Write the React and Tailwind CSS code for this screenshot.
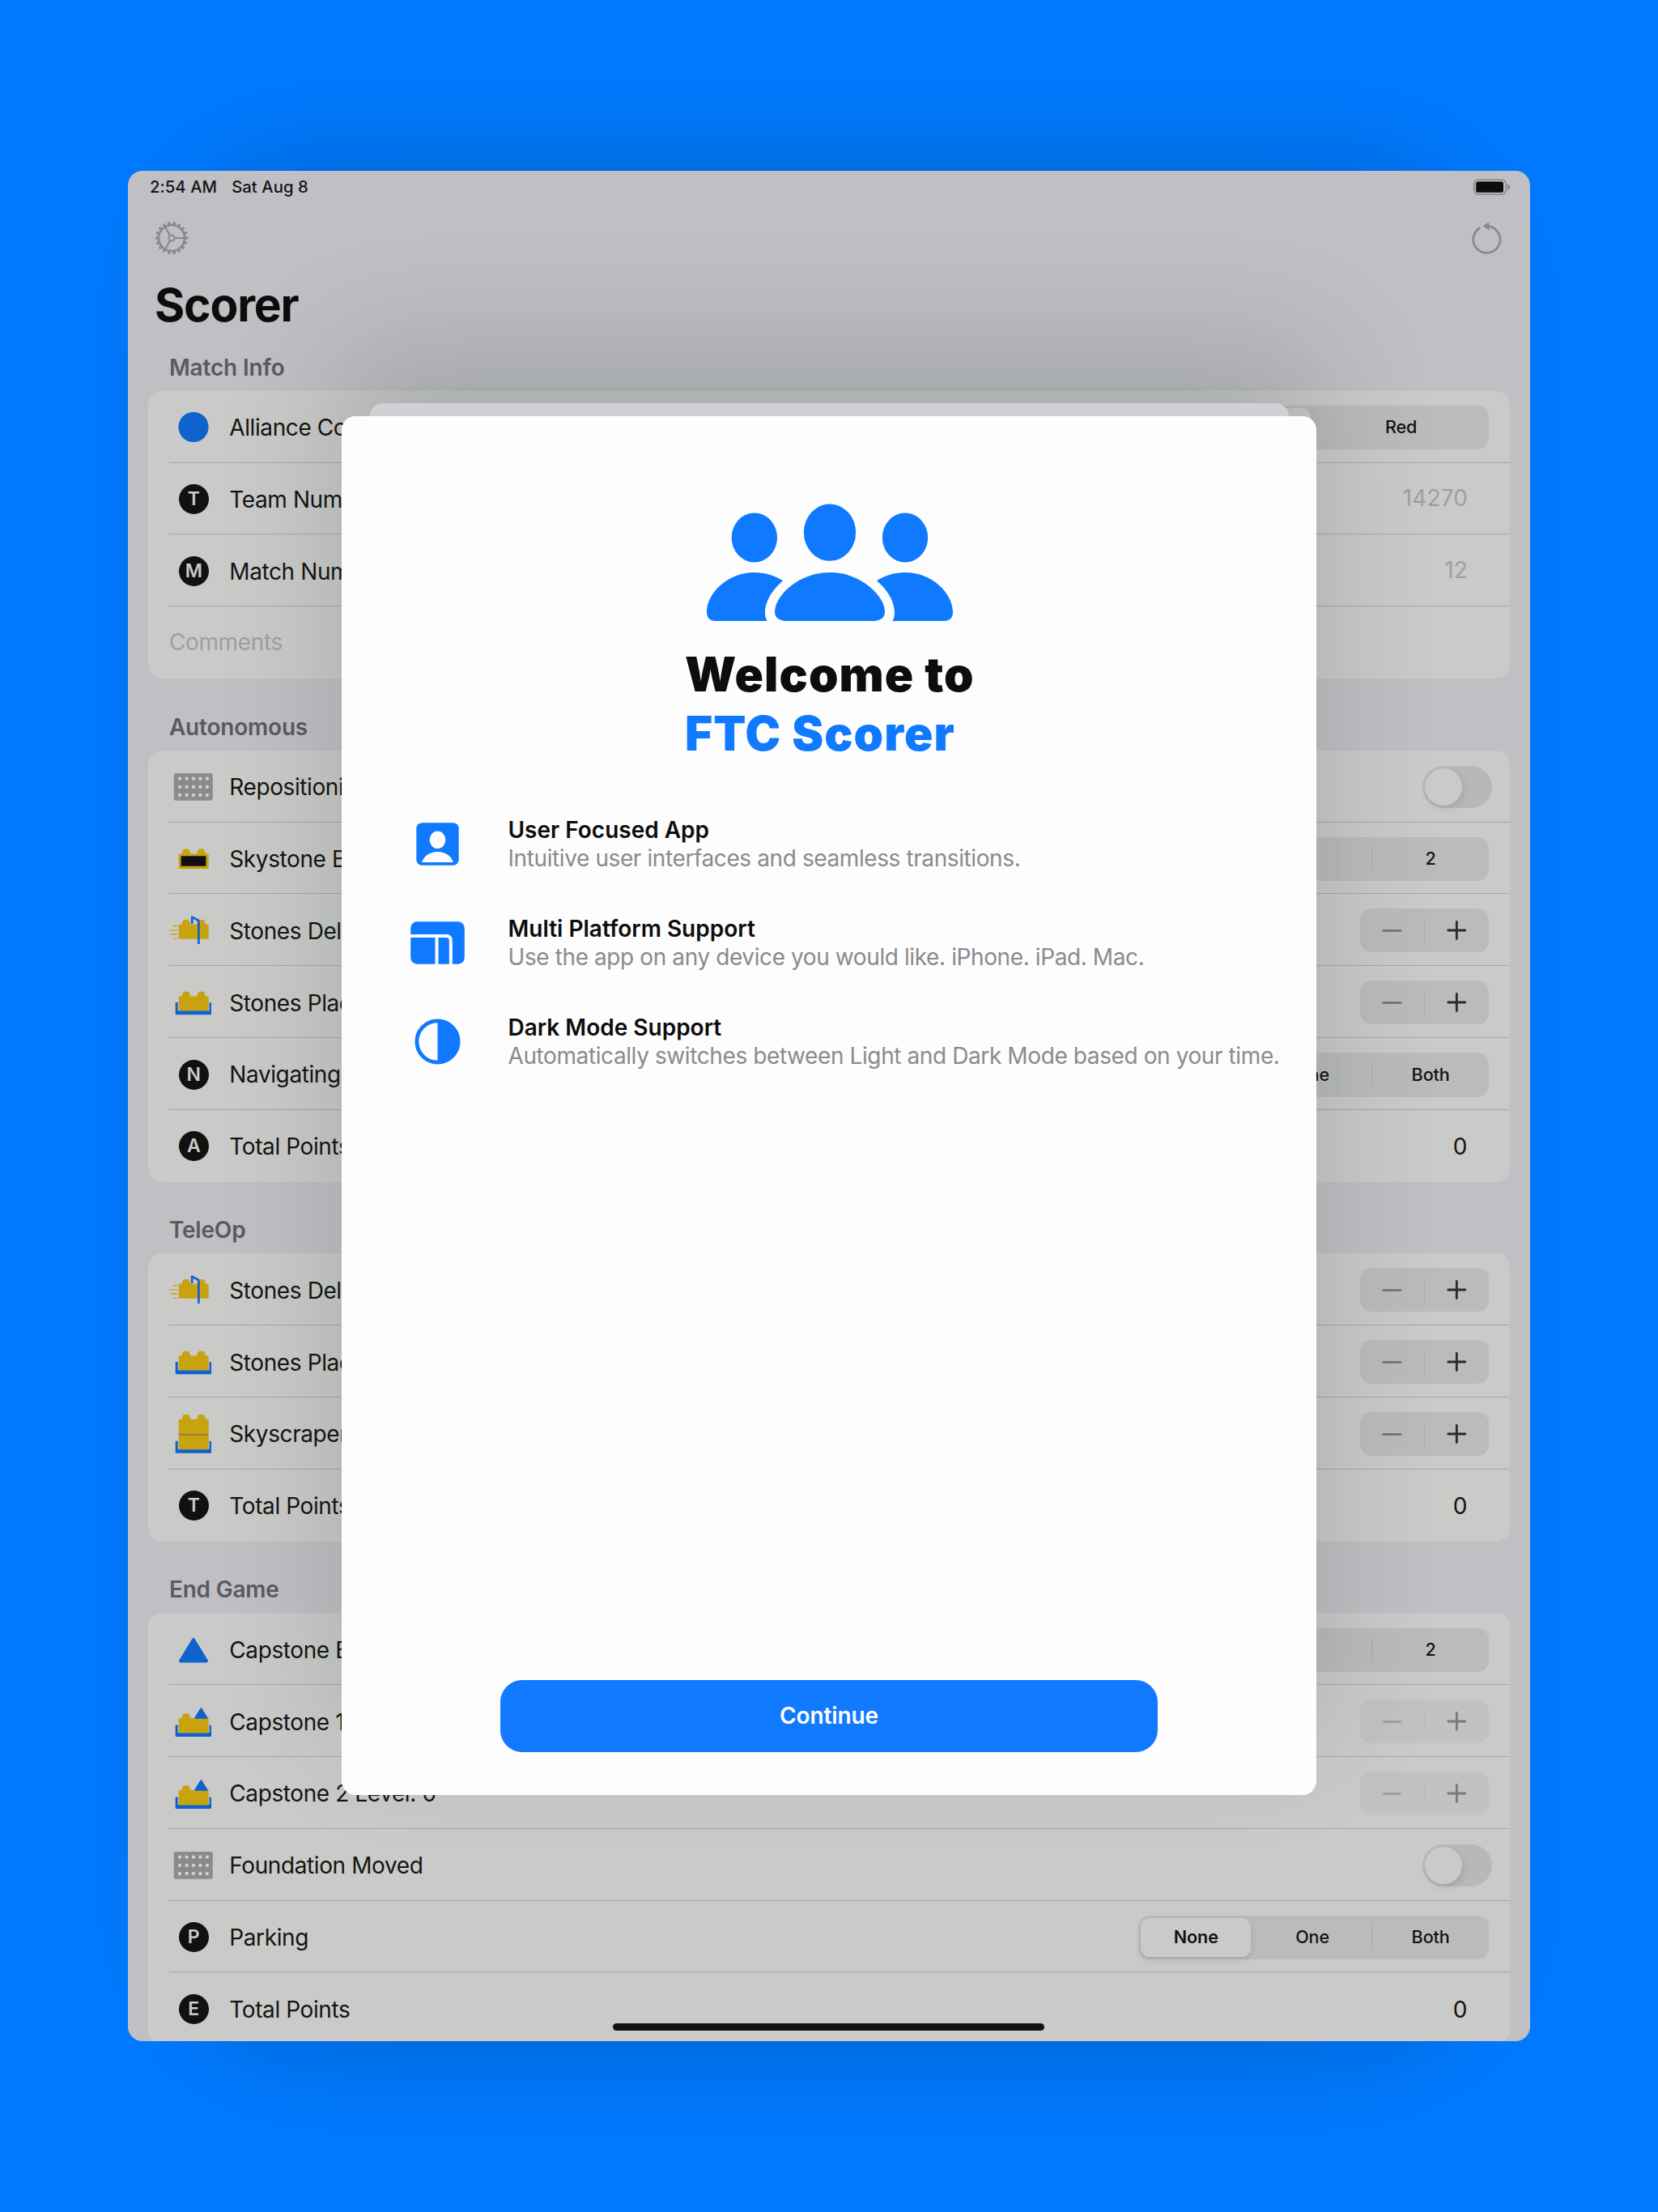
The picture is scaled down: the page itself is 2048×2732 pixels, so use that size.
import React from "react";

const GOLD = "#c9a20f";
const BLUE = "#1062cd";

function Brick({ top, body, bottom }) {
  return (
    <path
      fill={GOLD}
      d={`M-17.3 ${bottom} L-18.3 ${bottom - 1} V${body + 1} Q-18.3 ${body} -17.3 ${body} H-14.8 L-12.9 ${top + 1} Q-12.4 ${top} -11.4 ${top} H-7 Q-6 ${top} -5.5 ${top + 1} L-3.4 ${body} H3.8 L5.9 ${top + 1} Q6.4 ${top} 7.4 ${top} H11.8 Q12.8 ${top} 13.3 ${top + 1} L15.2 ${body} H17.7 Q18.7 ${body} 18.7 ${body + 1} V${bottom - 1} L17.7 ${bottom} Z`}
    />
  );
}

function Base({ top, bottom }) {
  return (
    <path
      fill={BLUE}
      d={`M-22.3 ${top} H-19.3 V${bottom - 5} H19.6 V${top} H21 Q22 ${top} 22 ${top + 1} V${bottom - 1} Q22 ${bottom} 21 ${bottom} H-21.3 Q-22.3 ${bottom} -22.3 ${bottom - 1} Z`}
    />
  );
}

function Art({ kind }) {
  if (kind === "circle") return <circle r="18.6" cy="0.5" fill={BLUE} />;
  if (kind === "foundation")
    return (
      <>
        <rect x="-24.2" y="-15.9" width="48" height="33.6" rx="2.6" fill="#8b8b8c" />
        {[-16.9, -8.4, 0, 8.4, 16.9].map((x) =>
          [-9.4, 0.8, 11].map((y) => (
            <rect key={x + "," + y} x={x - 1.9} y={y - 1.9} width="3.8" height="3.8" rx="0.8" fill="#d2d2d2" />
          ))
        )}
      </>
    );
  if (kind === "skystone")
    return (
      <>
        <Brick top={-11.4} body={-5.5} bottom={12.9} />
        <rect x="-15.4" y="-2.8" width="30.8" height="12.6" rx="0.6" fill="#101010" />
      </>
    );
  if (kind === "delivered")
    return (
      <>
        <Brick top={-13} body={-7.3} bottom={10.7} />
        <g stroke={GOLD} strokeWidth="1.4" strokeLinecap="round">
          <path d="M-24.8 -5.3H-20.6" />
          <path d="M-29.6 -0.1H-20.6" />
          <path d="M-28 5H-20.6" />
          <path d="M-24.8 10.1H-20.6" />
        </g>
        <path d="M-1.8 -7.9V-16.4L6.4 -12V17" fill="none" stroke={BLUE} strokeWidth="2.7" strokeLinejoin="round" />
      </>
    );
  if (kind === "placed")
    return (
      <>
        <Base top={0.1} bottom={15.2} />
        <Brick top={-13.2} body={-7.5} bottom={10.2} />
      </>
    );
  if (kind === "skyscraper")
    return (
      <>
        <Base top={8.7} bottom={23.7} />
        <Brick top={-24} body={-18} bottom={19.3} />
        <path d="M-18.3 0.9H18.7" stroke="#8a7a4a" strokeWidth="1.6" />
      </>
    );
  if (kind === "triangle")
    return (
      <path
        d="M0 -12.6L15.9 13.6H-15.9Z"
        fill={BLUE}
        stroke={BLUE}
        strokeWidth="4"
        strokeLinejoin="round"
        transform="translate(0 0.8)"
      />
    );
  return (
    <>
      <Base top={4.4} bottom={18.9} />
      <Brick top={-9.8} body={-3.8} bottom={14.4} />
      <path d="M1 -10.5H18.8V-3.8H1Z" fill="#cacac9" />
      <path d="M9.4 -16L17 -4H1.8Z" fill={BLUE} stroke={BLUE} strokeWidth="1.6" strokeLinejoin="round" />
    </>
  );
}

function RowIcon({ kind, letter }) {
  if (letter)
    return (
      <span className="flex h-[37px] w-[37px] items-center justify-center rounded-full bg-[#111111] text-[23px] font-semibold leading-none text-[#cacac9]">
        {letter}
      </span>
    );
  return (
    <svg width="64" height="56" viewBox="-32 -28 64 56" className="mb-[1.4px] shrink-0">
      <Art kind={kind} />
    </svg>
  );
}

function Toggle() {
  return (
    <div className="mr-[-4px] flex h-[52.4px] w-[86.3px] items-center rounded-full bg-[#b8b8ba] pl-[3.4px]">
      <div className="h-[45.8px] w-[45.8px] rounded-full bg-[#cacaca] shadow-[2px_4px_8px_rgba(0,0,0,0.1)]" />
    </div>
  );
}

function Segmented({ options }) {
  const three = options.length === 3;
  return (
    <div className="flex h-[54.4px] w-[433px] items-center rounded-[14px] bg-[#bbbbbb] py-[3.4px] pl-[3.4px] text-[21.6px] font-medium leading-none tracking-[-0.1px] text-[#121212]">
      <div
        className={
          three
            ? "flex h-full w-[136px] items-center justify-center rounded-[11.5px] bg-[#cacaca] font-semibold shadow-[0_4px_8px_rgba(0,0,0,0.1)]"
            : "flex h-full w-[210px] items-center justify-center rounded-[11.5px] bg-[#cacaca] font-semibold shadow-[0_4px_8px_rgba(0,0,0,0.1)]"
        }
      >
        {options[0]}
      </div>
      <div className="flex flex-1 justify-center pl-[3px]">{options[1]}</div>
      {three && (
        <>
          <div className="h-[30px] w-[1.5px] shrink-0 bg-[#a8a8a9]" />
          <div className="flex w-[143.5px] justify-center">{options[2]}</div>
        </>
      )}
    </div>
  );
}

function Stepper({ disabled }) {
  return (
    <div
      className={
        disabled
          ? "mb-[1px] flex h-[54px] w-[158.8px] items-center rounded-[14px] bg-[#bbbbbb] opacity-50"
          : "mb-[1px] flex h-[54px] w-[158.8px] items-center rounded-[14px] bg-[#bbbbbb]"
      }
    >
      <svg className="flex-1" height="30" viewBox="-39 -15 78 30">
        <path d="M-10.6 0.5H10.8" stroke="#6d6e6c" strokeWidth="2.6" strokeLinecap="round" />
      </svg>
      <div className="h-[30px] w-[1.5px] bg-[#a8a8a9]" />
      <svg className="flex-1" height="30" viewBox="-39 -15 78 30">
        <path d="M-10.5 0H10.5M0 -10.5V10.5" stroke="#2a2a2a" strokeWidth="2.8" strokeLinecap="round" />
      </svg>
    </div>
  );
}

function Row({ row, last }) {
  return (
    <div
      className={
        last
          ? "ml-[25.5px] flex h-[88.8px] items-center pr-[25.7px] pt-[1.6px]"
          : "ml-[25.5px] flex h-[88.8px] items-center border-b-[1.5px] border-[#a6a6a7] pr-[25.7px] pt-[3px]"
      }
    >
      {row.placeholder ? (
        <span className="mb-[3px] tracking-[-0.35px] text-[#9f9fa0]">{row.placeholder}</span>
      ) : (
        <>
          <div className="flex w-[60.4px] shrink-0 justify-center">
            <RowIcon kind={row.icon} letter={row.letter} />
          </div>
          <span className="ml-[14px] flex-1 whitespace-nowrap">{row.label}</span>
          {row.toggle && <Toggle />}
          {row.options && <Segmented options={row.options} />}
          {row.stepper && <Stepper disabled={row.disabled} />}
          {row.hint && <span className="mb-[4px] mr-[26px] tracking-[0.1px] text-[#9f9fa0]">{row.hint}</span>}
          {row.value && <span className="mr-[27px]">{row.value}</span>}
        </>
      )}
    </div>
  );
}

const sections = [
  {
    title: "Match Info",
    rows: [
      { icon: "circle", label: "Alliance Color", options: ["Blue", "Red"] },
      { letter: "T", label: "Team Number", hint: "14270" },
      { letter: "M", label: "Match Number", hint: "12" },
      { placeholder: "Comments" },
    ],
  },
  {
    title: "Autonomous",
    rows: [
      { icon: "foundation", label: "Repositioning", toggle: true },
      { icon: "skystone", label: "Skystone Bonus", options: ["0", "1", "2"] },
      { icon: "delivered", label: "Stones Delivered: 0", stepper: true },
      { icon: "placed", label: "Stones Placed: 0", stepper: true },
      { letter: "N", label: "Navigating", options: ["None", "One", "Both"] },
      { letter: "A", label: "Total Points", value: "0" },
    ],
  },
  {
    title: "TeleOp",
    rows: [
      { icon: "delivered", label: "Stones Delivered: 0", stepper: true },
      { icon: "placed", label: "Stones Placed: 0", stepper: true },
      { icon: "skyscraper", label: "Skyscraper Height: 0", stepper: true },
      { letter: "T", label: "Total Points", value: "0" },
    ],
  },
  {
    title: "End Game",
    rows: [
      { icon: "triangle", label: "Capstone Bonus", options: ["0", "1", "2"] },
      { icon: "capstone", label: "Capstone 1 Level: 0", stepper: true, disabled: true },
      { icon: "capstone", label: "Capstone 2 Level: 0", stepper: true, disabled: true },
      { icon: "foundation", label: "Foundation Moved", toggle: true },
      { letter: "P", label: "Parking", options: ["None", "One", "Both"] },
      { letter: "E", label: "Total Points", value: "0" },
    ],
  },
];

function Gear() {
  const teeth = Array.from({ length: 18 }, (_, i) => i * 20);
  return (
    <svg width="42" height="42" viewBox="-21 -21 42 42" fill="none" stroke="#8a8a8b">
      <circle r="16" strokeWidth="2.6" />
      {teeth.map((a) => (
        <path key={a} d="M17 -1.4L19.6 -0.8V0.8L17 1.4" strokeWidth="1.1" fill="#8a8a8b" transform={`rotate(${a})`} />
      ))}
      <circle r="3.6" strokeWidth="2" />
      <path d="M4 0H16M-2 -3.4L-8 -13.8M-2 3.4L-8 13.8" strokeWidth="2.2" />
    </svg>
  );
}

function Reload() {
  return (
    <svg width="40" height="42" viewBox="-20 -21 40 42" fill="none">
      <path
        d="M-8.4 -13.2A16.6 16.6 0 1 0 2.4 -15.6"
        stroke="#8a8a8b"
        strokeWidth="2.8"
        strokeLinecap="round"
        transform="translate(0 0.9)"
      />
      <path d="M-4.6 -14.9L3.4 -19.6V-9.4Z" fill="#8a8a8b" />
    </svg>
  );
}

function People() {
  const side =
    "M159 497C159 430 235 351 335 351C375 351 412 363 441 382C400 417 375 460 375 500C375 513 378 523 383 531H196C170 531 159 520 159 497Z";
  return (
    <svg width="306" height="146" viewBox="156 96 918 438" fill="#0f7aff">
      <ellipse cx="615" cy="203" rx="96.5" ry="105.5" />
      <path d="M411 497C411 440 497 351 615 351C733 351 819 440 819 497C819 520 800 531 773 531H457C430 531 411 520 411 497Z" />
      <ellipse cx="335.5" cy="222" rx="84.5" ry="91.5" />
      <path d={side} />
      <g transform="translate(1230 0) scale(-1 1)">
        <ellipse cx="336" cy="222" rx="84.5" ry="91.5" />
        <path d={side} />
      </g>
    </svg>
  );
}

function UserIcon() {
  return (
    <svg width="53" height="53" viewBox="0 0 53 53">
      <rect x="0.3" y="0.3" width="52.4" height="52.4" rx="7" fill="#0f7aff" />
      <ellipse cx="26.5" cy="21.3" rx="9.9" ry="10.8" fill="#fdfdfd" />
      <path d="M7 49C10 41 17 36 26.5 36S43 41 46 49Z" fill="#fdfdfd" />
    </svg>
  );
}

function PlatformIcon() {
  return (
    <svg width="67" height="53" viewBox="0 0 67 53">
      <rect x="0.2" y="0.3" width="66.6" height="52.4" rx="8" fill="#0f7aff" />
      <path d="M0 18H44.5Q49.8 18 49.8 24V53M32.5 18V53" fill="none" stroke="#fdfdfd" strokeWidth="4" />
    </svg>
  );
}

function DarkIcon() {
  return (
    <svg width="57" height="57" viewBox="0 0 57 57">
      <circle cx="28.5" cy="28.5" r="25.6" fill="none" stroke="#0f7aff" strokeWidth="4.8" />
      <path d="M28.5 1A27.5 27.5 0 0 1 28.5 56Z" fill="#0f7aff" />
    </svg>
  );
}

const features = [
  { icon: <UserIcon />, title: "User Focused App", text: "Intuitive user interfaces and seamless transitions." },
  {
    icon: <PlatformIcon />,
    title: "Multi Platform Support",
    text: "Use the app on any device you would like. iPhone. iPad. Mac.",
  },
  {
    icon: <DarkIcon />,
    title: "Dark Mode Support",
    text: "Automatically switches between Light and Dark Mode based on your time.",
  },
];

function WelcomeSheet() {
  return (
    <div className="absolute left-[264px] top-[303.5px] flex h-[1702.5px] w-[1204px] flex-col items-center rounded-[17px] bg-[#fdfdfd]">
      <div className="ml-[2px] mt-[108px]">
        <People />
      </div>
      <div className="mt-[28px] w-[356px] whitespace-nowrap text-[58.5px] font-black leading-[73px] tracking-[1.1px] text-[#0d0d0d]">
        <div>Welcome to</div>
        <div className="text-[#0f7aff]">FTC Scorer</div>
      </div>
      <div className="mt-[40px] w-full">
        {features.map((f) => (
          <div key={f.title} className="flex h-[122px] items-center">
            <div className="mb-[1.5px] ml-[84.5px] flex w-[67px] justify-center">{f.icon}</div>
            <div className="ml-[54px] whitespace-nowrap leading-[34.8px]">
              <div className="font-semibold text-[#0d0d0d] tracking-[0px]">{f.title}</div>
              <div className="text-[#8a8a8e]">{f.text}</div>
            </div>
          </div>
        ))}
      </div>
      <div className="mb-[53px] mt-auto flex h-[89px] w-[812px] items-center justify-center rounded-[27px] bg-[#127aff] font-semibold tracking-[-0.1px] text-white">
        Continue
      </div>
    </div>
  );
}

export default function App() {
  return (
    <div className="flex h-[2732px] w-[2048px] justify-center overflow-hidden bg-[#007aff] pt-[210.5px] font-['Inter',sans-serif]">
      <div className="relative h-[2310.5px] w-[1732px]">
        <div className="absolute inset-x-[75px] inset-y-0 rounded-[140px] shadow-[0_0_150px_rgba(0,0,0,0.22)]" />
        <div className="relative h-full overflow-hidden rounded-[18px] bg-[#c0bfc4] text-[28px] leading-[36px] tracking-[-0.4px] text-[#141414]">
          <div className="flex h-[41.6px] items-center justify-between pl-[27px] pr-[24.5px]">
            <div className="flex gap-[18px] text-[20.3px] font-medium leading-none tracking-[0.05px]">
              <span>2:54 AM</span>
              <span>Sat Aug 8</span>
            </div>
            <svg width="46" height="20" viewBox="0 0 46 20">
              <rect x="0.8" y="0.8" width="39.4" height="18.4" rx="5.4" fill="none" stroke="#79797b" strokeWidth="1.3" />
              <rect x="3.2" y="3.2" width="33.8" height="13.6" rx="2.6" fill="#0c0c0c" />
              <path d="M42.2 6.4Q45 7.6 45 10T42.2 13.6Z" fill="#79797b" />
            </svg>
          </div>
          <div className="flex h-[83px] items-center justify-between pl-[33px] pr-[34.5px]">
            <Gear />
            <Reload />
          </div>
          <div className="flex h-[82px] items-center pl-[33px] pt-[2px] text-[57px] font-bold tracking-[-1.2px] text-[#0d0d0d]">
            Scorer
          </div>
          <div className="px-[25.4px]">
            {sections.map((s, i) => (
              <section key={s.title}>
                <h2
                  className={
                    i === 0
                      ? "flex h-[65.7px] items-end pb-[11px] pl-[25.5px] font-semibold tracking-[-0.15px] text-[#5b5a5f]"
                      : "flex h-[88.8px] items-end pb-[11px] pl-[25.5px] font-semibold tracking-[-0.2px] text-[#5b5a5f]"
                  }
                >
                  {s.title}
                </h2>
                <div className="rounded-[17px] bg-[#cacac9]">
                  {s.rows.map((r, j) => (
                    <Row key={j} row={r} last={j === s.rows.length - 1} />
                  ))}
                </div>
              </section>
            ))}
          </div>
          <div className="absolute left-[264px] top-[303.5px] h-[1702.5px] w-[1204px] rounded-[17px] shadow-[0_-78px_150px_rgba(20,50,30,0.19)]" />
          <div className="absolute left-[298px] top-[287px] h-[200px] w-[1136px] rounded-[17px] bg-[#d1d0d5]" />
          <WelcomeSheet />
          <div className="absolute left-[599px] top-[2288.5px] h-[9.4px] w-[533px] rounded-full bg-[#121212]" />
        </div>
      </div>
    </div>
  );
}
